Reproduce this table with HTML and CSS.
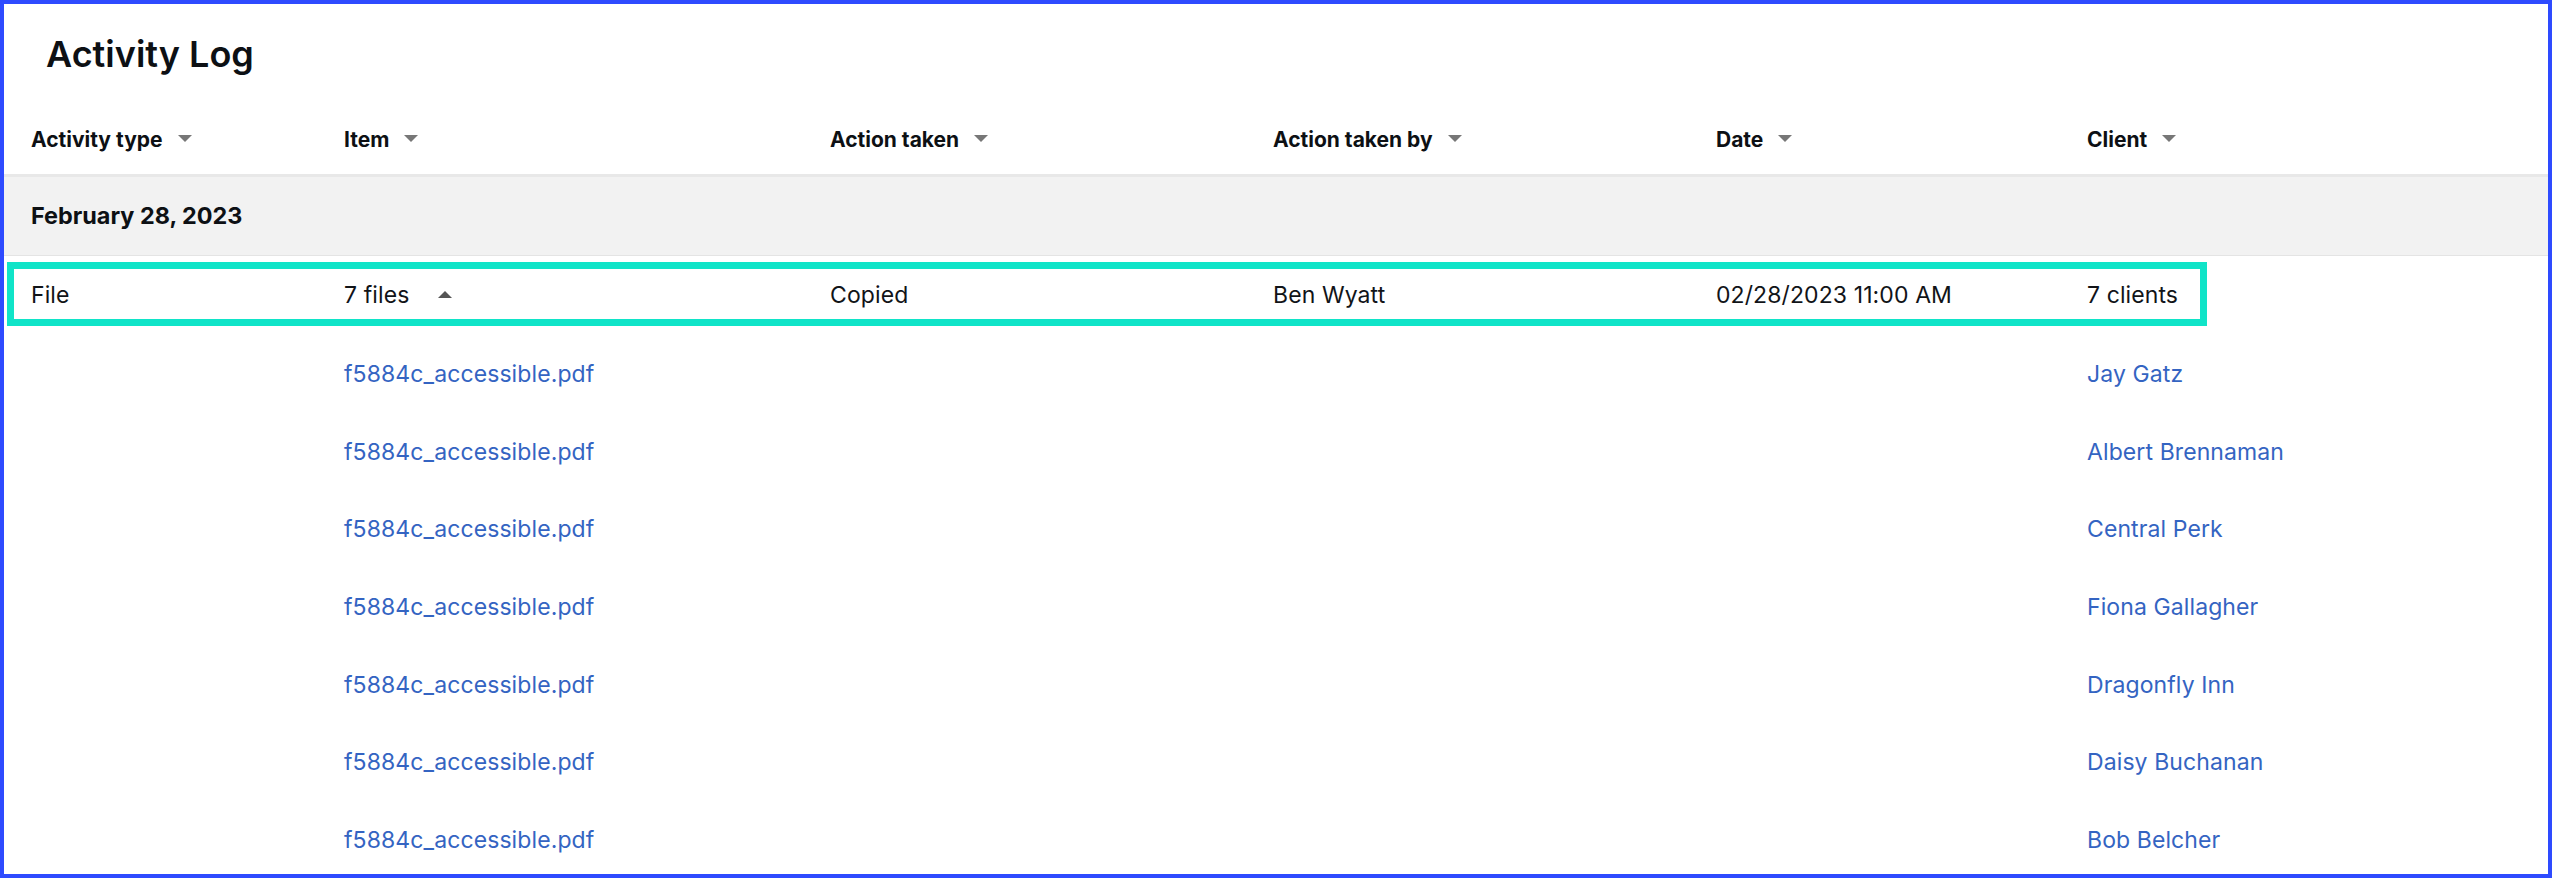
FILE: index.html
```html
<!DOCTYPE html>
<html lang="en">
<head>
<meta charset="utf-8">
<title>Activity Log</title>
<link rel="stylesheet" href="styles.css">
</head>
<body>
<div class="frame">
  <h1 class="title">Activity Log</h1>
  <div class="thead grid">
    <div class="th">Activity type <span class="caret"></span></div>
    <div class="th">Item <span class="caret"></span></div>
    <div class="th">Action taken <span class="caret"></span></div>
    <div class="th">Action taken by <span class="caret"></span></div>
    <div class="th">Date <span class="caret"></span></div>
    <div class="th">Client <span class="caret"></span></div>
  </div>
  <div class="group">February 28, 2023</div>
  <div class="row-main grid">
    <div class="td">File</div>
    <div class="td">7 files <span class="caret-up"></span></div>
    <div class="td">Copied</div>
    <div class="td">Ben Wyatt</div>
    <div class="td">02/28/2023 11:00 AM</div>
    <div class="td">7 clients</div>
  </div>
  <div class="row-sub grid"><div></div><div class="td"><a class="link" href="#">f5884c_accessible.pdf</a></div><div></div><div></div><div></div><div class="td"><a class="link" href="#">Jay Gatz</a></div></div>
  <div class="row-sub grid"><div></div><div class="td"><a class="link" href="#">f5884c_accessible.pdf</a></div><div></div><div></div><div></div><div class="td"><a class="link" href="#">Albert Brennaman</a></div></div>
  <div class="row-sub grid"><div></div><div class="td"><a class="link" href="#">f5884c_accessible.pdf</a></div><div></div><div></div><div></div><div class="td"><a class="link" href="#">Central Perk</a></div></div>
  <div class="row-sub grid"><div></div><div class="td"><a class="link" href="#">f5884c_accessible.pdf</a></div><div></div><div></div><div></div><div class="td"><a class="link" href="#">Fiona Gallagher</a></div></div>
  <div class="row-sub grid"><div></div><div class="td"><a class="link" href="#">f5884c_accessible.pdf</a></div><div></div><div></div><div></div><div class="td"><a class="link" href="#">Dragonfly Inn</a></div></div>
  <div class="row-sub grid"><div></div><div class="td"><a class="link" href="#">f5884c_accessible.pdf</a></div><div></div><div></div><div></div><div class="td"><a class="link" href="#">Daisy Buchanan</a></div></div>
  <div class="row-sub grid"><div></div><div class="td"><a class="link" href="#">f5884c_accessible.pdf</a></div><div></div><div></div><div></div><div class="td"><a class="link" href="#">Bob Belcher</a></div></div>
</div>
</body>
</html>
```

FILE: styles.css
```css
html, body {
  margin: 0;
  padding: 0;
  background: #ffffff;
}

body {
  font-family: "Inter", "Liberation Sans", sans-serif;
  color: #111418;
}

.frame {
  box-sizing: border-box;
  width: 2552px;
  height: 878px;
  border: 4px solid #2e4bff;
  overflow: hidden;
  background: #ffffff;
}

.title {
  margin: 0;
  height: 100px;
  display: flex;
  align-items: center;
  padding-left: 42px;
  font-size: 36px;
  font-weight: 600;
  line-height: 1;
  color: #0d1014;
}

.grid {
  display: grid;
  grid-template-columns: 313px 486px 443px 443px 371px 1fr;
  align-items: center;
}

.thead {
  box-sizing: border-box;
  height: 73px;
  padding-left: 27px;
  border-bottom: 3px solid #e8e8e8;
}

.th {
  display: flex;
  align-items: center;
  gap: 15px;
  font-size: 21px;
  font-weight: 700;
  line-height: 1;
  color: #0d1014;
}

.caret {
  width: 0;
  height: 0;
  border-left: 7.5px solid transparent;
  border-right: 7.5px solid transparent;
  border-top: 7px solid #777777;
  margin-top: -1px;
}

.caret-up {
  display: inline-block;
  width: 0;
  height: 0;
  border-left: 7.5px solid transparent;
  border-right: 7.5px solid transparent;
  border-bottom: 7px solid #555555;
  margin-left: 22px;
  vertical-align: 5px;
}

.group {
  box-sizing: border-box;
  height: 79px;
  display: flex;
  align-items: center;
  padding-left: 27px;
  background: #f2f2f2;
  border-bottom: 1px solid #e4e4e4;
  font-size: 23.4px;
  font-weight: 700;
  line-height: 1;
  color: #0d1014;
}

.row-main {
  box-sizing: border-box;
  width: 2200px;
  height: 64px;
  margin: 6px 0 10px 3px;
  padding-left: 17px;
  padding-top: 3px;
  border: 7px solid #10e4c8;
}

.td {
  font-size: 23px;
  font-weight: 400;
  line-height: 1;
  letter-spacing: 0.1px;
  color: #111418;
  white-space: nowrap;
}

.row-sub {
  height: 77.6px;
  padding-left: 27px;
}

.link {
  color: #3464c2;
  text-decoration: none;
}
```
